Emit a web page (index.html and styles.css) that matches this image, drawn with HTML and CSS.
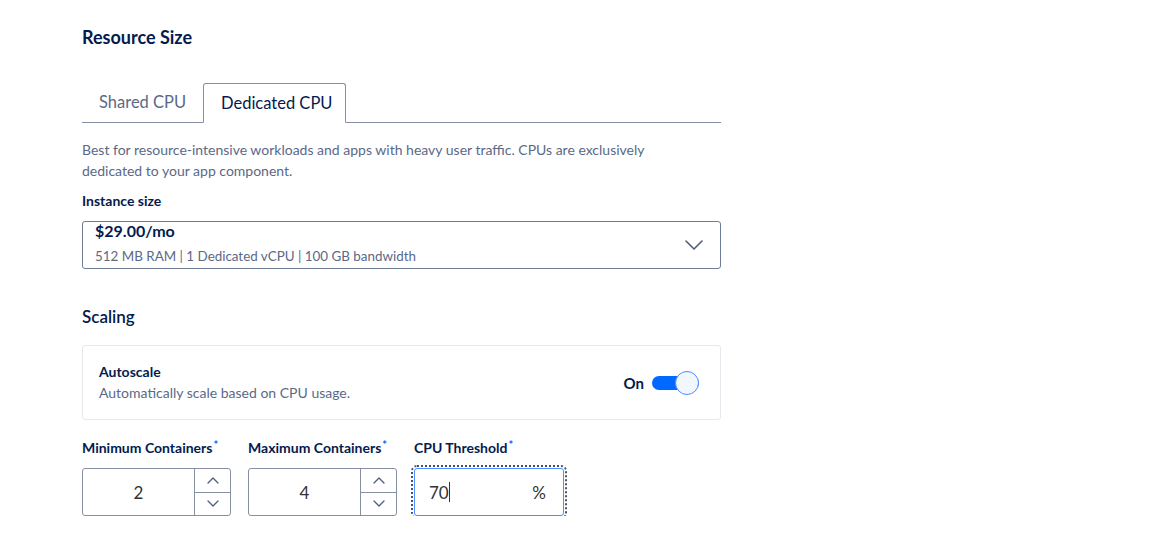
FILE: index.html
```html
<!DOCTYPE html>
<html>
<head>
<meta charset="utf-8">
<link rel="stylesheet" href="styles.css">
</head>
<body>
<div class="page">
  <h2 class="title">Resource Size</h2>
  <div class="tabs">
    <div class="tab">Shared CPU</div>
    <div class="tab active">Dedicated CPU</div>
  </div>
  <p class="desc">Best for resource-intensive workloads and apps with heavy user traffic. CPUs are exclusively dedicated to your app component.</p>
  <div class="label">Instance size</div>
  <div class="select">
    <div class="select-text">
      <div class="price">$29.00/mo</div>
      <div class="specs">512 MB RAM | 1 Dedicated vCPU | 100 GB bandwidth</div>
    </div>
    <svg class="chev" width="18" height="10" viewBox="0 0 18 10"><path d="M1 1l8 8 8-8" fill="none" stroke="#4d5b7c" stroke-width="1.6" stroke-linecap="round" stroke-linejoin="round"/></svg>
  </div>
  <h3 class="subtitle">Scaling</h3>
  <div class="card">
    <div>
      <div class="card-title">Autoscale</div>
      <div class="card-sub">Automatically scale based on CPU usage.</div>
    </div>
    <div class="toggle-wrap">
      <span class="on">On</span>
      <span class="toggle"><span class="knob"></span></span>
    </div>
  </div>
  <div class="fields">
    <div class="field">
      <div class="label">Minimum Containers<span class="req">*</span></div>
      <div class="number">
        <div class="num-val">2</div>
        <div class="stepper">
          <div class="step"><svg width="12" height="7" viewBox="0 0 12 7"><path d="M1 6l5-5 5 5" fill="none" stroke="#4d5b7c" stroke-width="1.3" stroke-linecap="round" stroke-linejoin="round"/></svg></div>
          <div class="step"><svg width="12" height="7" viewBox="0 0 12 7"><path d="M1 1l5 5 5-5" fill="none" stroke="#4d5b7c" stroke-width="1.3" stroke-linecap="round" stroke-linejoin="round"/></svg></div>
        </div>
      </div>
    </div>
    <div class="field">
      <div class="label">Maximum Containers<span class="req">*</span></div>
      <div class="number">
        <div class="num-val">4</div>
        <div class="stepper">
          <div class="step"><svg width="12" height="7" viewBox="0 0 12 7"><path d="M1 6l5-5 5 5" fill="none" stroke="#4d5b7c" stroke-width="1.3" stroke-linecap="round" stroke-linejoin="round"/></svg></div>
          <div class="step"><svg width="12" height="7" viewBox="0 0 12 7"><path d="M1 1l5 5 5-5" fill="none" stroke="#4d5b7c" stroke-width="1.3" stroke-linecap="round" stroke-linejoin="round"/></svg></div>
        </div>
      </div>
    </div>
    <div class="field">
      <div class="label">CPU Threshold<span class="req">*</span></div>
      <div class="threshold">
        <span class="thr-val">70<span class="caret"></span></span>
        <span class="pct">%</span>
      </div>
    </div>
  </div>
</div>
</body>
</html>
```
FILE: styles.css
```css
* { box-sizing: border-box; }
body {
  margin: 0;
  background: #fff;
  font-family: "Lato", "Noto Sans", sans-serif;
  color: #031b4e;
}
.page {
  width: 721px;
  padding: 26px 0 0 82px;
}
.title {
  margin: 0;
  font-size: 18px;
  font-weight: 700;
  line-height: 22px;
}
.tabs {
  display: flex;
  margin-top: 35px;
  border-bottom: 1px solid #8690a2;
  height: 40px;
}
.tab {
  padding: 0 17px;
  font-size: 16.5px;
  line-height: 38px;
  color: #5b6987;
  width: 121px;
  white-space: nowrap;
}
.tab.active {
  width: 143px;
  color: #031b4e;
  border: 1px solid #8690a2;
  border-bottom: 1px solid #fff;
  border-radius: 3px 3px 0 0;
  height: 40px;
  background: #fff;
}
.desc {
  margin: 16px 0 0;
  max-width: 600px;
  font-size: 14px;
  line-height: 21px;
  color: #5b6987;
}
.label {
  font-size: 14px;
  font-weight: 700;
  line-height: 20px;
  margin-top: 10px;
}
.req { color: #0069ff; font-size: 11px; vertical-align: 4px; margin-left: 1px; }
.select {
  margin-top: 10px;
  height: 48px;
  border: 1px solid #6f7c96;
  border-radius: 3px;
  display: flex;
  align-items: center;
  justify-content: space-between;
  padding: 0 17px 0 12px;
}
.price {
  font-size: 16px;
  font-weight: 700;
  line-height: 20px;
  margin-top: -3px;
}
.specs {
  font-size: 13.4px;
  color: #5b6987;
  line-height: 20px;
  margin-top: 5px;
}
.subtitle {
  margin: 37px 0 0;
  font-size: 17px;
  font-weight: 600;
  line-height: 22px;
}
.card {
  margin-top: 17px;
  height: 75px;
  border: 1px solid #e5e8ed;
  border-radius: 3px;
  display: flex;
  align-items: center;
  justify-content: space-between;
  padding: 0 21px 0 16px;
}
.card-title { font-size: 14px; font-weight: 700; line-height: 20px; }
.card-sub { font-size: 14px; color: #5b6987; line-height: 22px; }
.toggle-wrap { display: flex; align-items: center; gap: 8px; }
.on { font-size: 15px; font-weight: 700; }
.toggle {
  position: relative;
  width: 47px;
  height: 14px;
  background: #0069ff;
  border-radius: 7px;
}
.knob {
  position: absolute;
  right: 0;
  top: -5px;
  width: 24px;
  height: 24px;
  border-radius: 50%;
  background: #f1f6ff;
  border: 1.5px solid #4d8dff;
}
.fields {
  display: flex;
  gap: 17px;
  margin-top: 15px;
}
.field .label { margin-top: 0; }
.number {
  margin-top: 10px;
  width: 149px;
  height: 48px;
  border: 1px solid #8690a2;
  border-radius: 3px;
  display: flex;
}
.num-val {
  flex: 1;
  display: flex;
  align-items: center;
  justify-content: center;
  font-size: 17px;
  color: #333;
}
.stepper {
  width: 36px;
  border-left: 1px solid #8690a2;
  display: flex;
  flex-direction: column;
}
.step {
  flex: 1;
  display: flex;
  align-items: center;
  justify-content: center;
}
.step + .step { border-top: 1px solid #8690a2; }
.threshold {
  margin-top: 10px;
  width: 150px;
  height: 48px;
  border: 1px solid #4d8dff;
  border-radius: 3px;
  outline: 2px dotted #46516b;
  outline-offset: 1px;
  display: flex;
  align-items: center;
  justify-content: space-between;
  padding: 0 17px 0 14px;
  font-size: 17px;
  color: #333;
}
.thr-val { display: flex; align-items: center; }
.caret { display: inline-block; width: 1px; height: 20px; background: #333; }
```
